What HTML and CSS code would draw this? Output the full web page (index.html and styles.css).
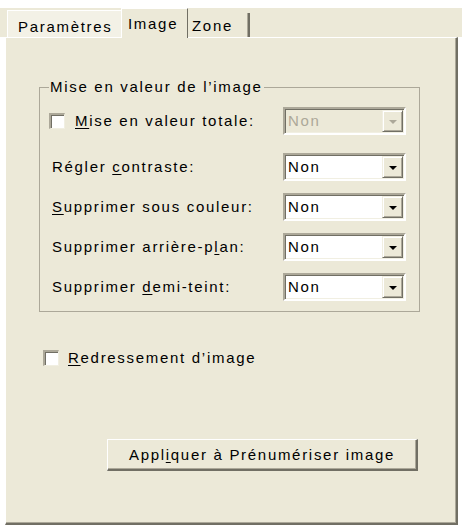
FILE: index.html
```html
<!DOCTYPE html>
<html lang="fr">
<head>
<meta charset="utf-8">
<title>Image</title>
<link rel="stylesheet" href="styles.css">
</head>
<body>
<div class="dialog">
  <div class="tabs">
    <div class="tab tab-first">Paramètres</div>
    <div class="tab tab-active">Image</div>
    <div class="tab tab-last">Zone</div>
  </div>
  <div class="panel">
    <fieldset class="group">
      <legend class="legend">Mise en valeur de l’image</legend>
      <div class="row row-first">
        <span class="check"></span>
        <span class="label label-check"><u>M</u>ise en valeur totale:</span>
        <div class="combo combo-disabled"><span class="value">Non</span><span class="drop"><span class="tri"></span></span></div>
      </div>
      <div class="row row-second">
        <span class="label"><span class="pad">Régler <u>c</u>ontraste:</span></span>
        <div class="combo"><span class="value">Non</span><span class="drop"><span class="tri"></span></span></div>
      </div>
      <div class="row">
        <span class="label"><span class="pad"><u>S</u>upprimer sous couleur:</span></span>
        <div class="combo"><span class="value">Non</span><span class="drop"><span class="tri"></span></span></div>
      </div>
      <div class="row">
        <span class="label"><span class="pad">Supprimer arrière-p<u>l</u>an:</span></span>
        <div class="combo"><span class="value">Non</span><span class="drop"><span class="tri"></span></span></div>
      </div>
      <div class="row">
        <span class="label"><span class="pad">Supprimer <u>d</u>emi-teint:</span></span>
        <div class="combo"><span class="value">Non</span><span class="drop"><span class="tri"></span></span></div>
      </div>
    </fieldset>
    <div class="check-row">
      <span class="check"></span>
      <span class="label-plain"><u>R</u>edressement d’image</span>
    </div>
    <div class="btn">Appl<u>i</u>quer à Prénumériser image</div>
  </div>
</div>
</body>
</html>
```

FILE: styles.css
```css
* { box-sizing: border-box; }
html, body { margin: 0; padding: 0; background: #ffffff; }
body {
  font-family: "Liberation Sans", Arial, sans-serif;
  font-size: 15px;
  letter-spacing: 1.7px;
  color: #000000;
  width: 462px;
  height: 531px;
  overflow: hidden;
}
u { text-decoration: underline; text-underline-offset: 2px; }

.dialog { padding-top: 8px; }

.tabs {
  display: flex;
  align-items: flex-end;
  height: 29px;
  background: #ece9d8;
  padding-left: 7px;
}
.tab { line-height: 18px; white-space: nowrap; }
.tab-first {
  width: 114px;
  height: 27px;
  padding: 7px 0 0 10px;
  background: #f3f1e6;
  border-top: 1px solid #ffffff;
  border-left: 1px solid #ffffff;
}
.tab-active {
  position: relative;
  z-index: 1;
  width: 67px;
  height: 30px;
  margin-bottom: -1px;
  padding: 6px 0 0 6px;
  background: #ece9d8;
  border-top: 1px solid #ffffff;
  border-left: 1px solid #ffffff;
  border-right: 1px solid #716f64;
}
.tab-last {
  width: 62px;
  height: 24px;
  padding: 4px 0 0 4px;
  background: #ece9d8;
  border-right: 2px solid #716f64;
  box-shadow: inset -1px 0 0 #aca899;
}

.panel {
  margin-left: 5px;
  width: 453px;
  height: 488px;
  background: #ece9d8;
  border-top: 1px solid #ffffff;
  border-left: 1px solid #ffffff;
  border-right: 2px solid #716f64;
  border-bottom: 2px solid #716f64;
  box-shadow: inset -1px -1px 0 #aca899;
  display: flex;
  flex-direction: column;
  align-items: flex-start;
}

.group {
  margin: 40px 0 0 33px;
  width: 381px;
  min-width: 0;
  padding: 11px 13px 10px 9px;
  border: 1px solid #aca899;
  display: flex;
  flex-direction: column;
  gap: 12px;
}
.legend {
  padding: 0 1px;
  line-height: 18px;
  margin: 0;
}

.row {
  display: flex;
  align-items: center;
  height: 28px;
}
.row-second { margin-top: 6px; }
.label { flex: 1; white-space: nowrap; line-height: 18px; }
.label-check { margin-left: 10px; }
.pad { padding-left: 3px; }

.check {
  flex: none;
  width: 16px;
  height: 16px;
  background: #ffffff;
  border-top: 2px solid #aca899;
  border-left: 2px solid #aca899;
  border-right: 1px solid #f1efe2;
  border-bottom: 1px solid #f1efe2;
  box-shadow: inset 1px 1px 0 #716f64;
}

.combo {
  flex: none;
  width: 123px;
  height: 28px;
  display: flex;
  align-items: stretch;
  background: #ffffff;
  border-top: 2px solid #aca899;
  border-left: 2px solid #aca899;
  border-right: 2px solid #ffffff;
  border-bottom: 2px solid #ffffff;
  box-shadow: inset 1px 1px 0 #716f64, inset -1px -1px 0 #f1efe2;
}
.combo .value {
  flex: 1;
  padding-left: 3px;
  line-height: 24px;
}
.drop {
  flex: none;
  width: 21px;
  margin: 1px 1px 1px 0;
  background: #ece9d8;
  border-top: 1px solid #f1efe2;
  border-left: 1px solid #f1efe2;
  border-right: 1px solid #716f64;
  border-bottom: 1px solid #716f64;
  box-shadow: inset 1px 1px 0 #ffffff, inset -1px -1px 0 #aca899;
  display: flex;
  align-items: center;
  justify-content: center;
}
.tri {
  width: 0;
  height: 0;
  border-left: 4px solid transparent;
  border-right: 4px solid transparent;
  border-top: 4px solid #000000;
  margin-top: 1px;
}
.combo-disabled { background: #ece9d8; }
.combo-disabled .value { color: #aca899; }
.combo-disabled .tri { border-top-color: #aca899; }

.check-row {
  display: flex;
  align-items: center;
  margin: 38px 0 0 37px;
  height: 16px;
}
.label-plain { margin-left: 9px; white-space: nowrap; line-height: 18px; }

.btn {
  margin: 73px 0 0 101px;
  width: 311px;
  height: 32px;
  line-height: 30px;
  text-align: center;
  white-space: nowrap;
  background: #ece9d8;
  border-top: 1px solid #ffffff;
  border-left: 1px solid #ffffff;
  border-right: 2px solid #716f64;
  border-bottom: 2px solid #716f64;
  box-shadow: inset -1px -1px 0 #aca899;
}
```
